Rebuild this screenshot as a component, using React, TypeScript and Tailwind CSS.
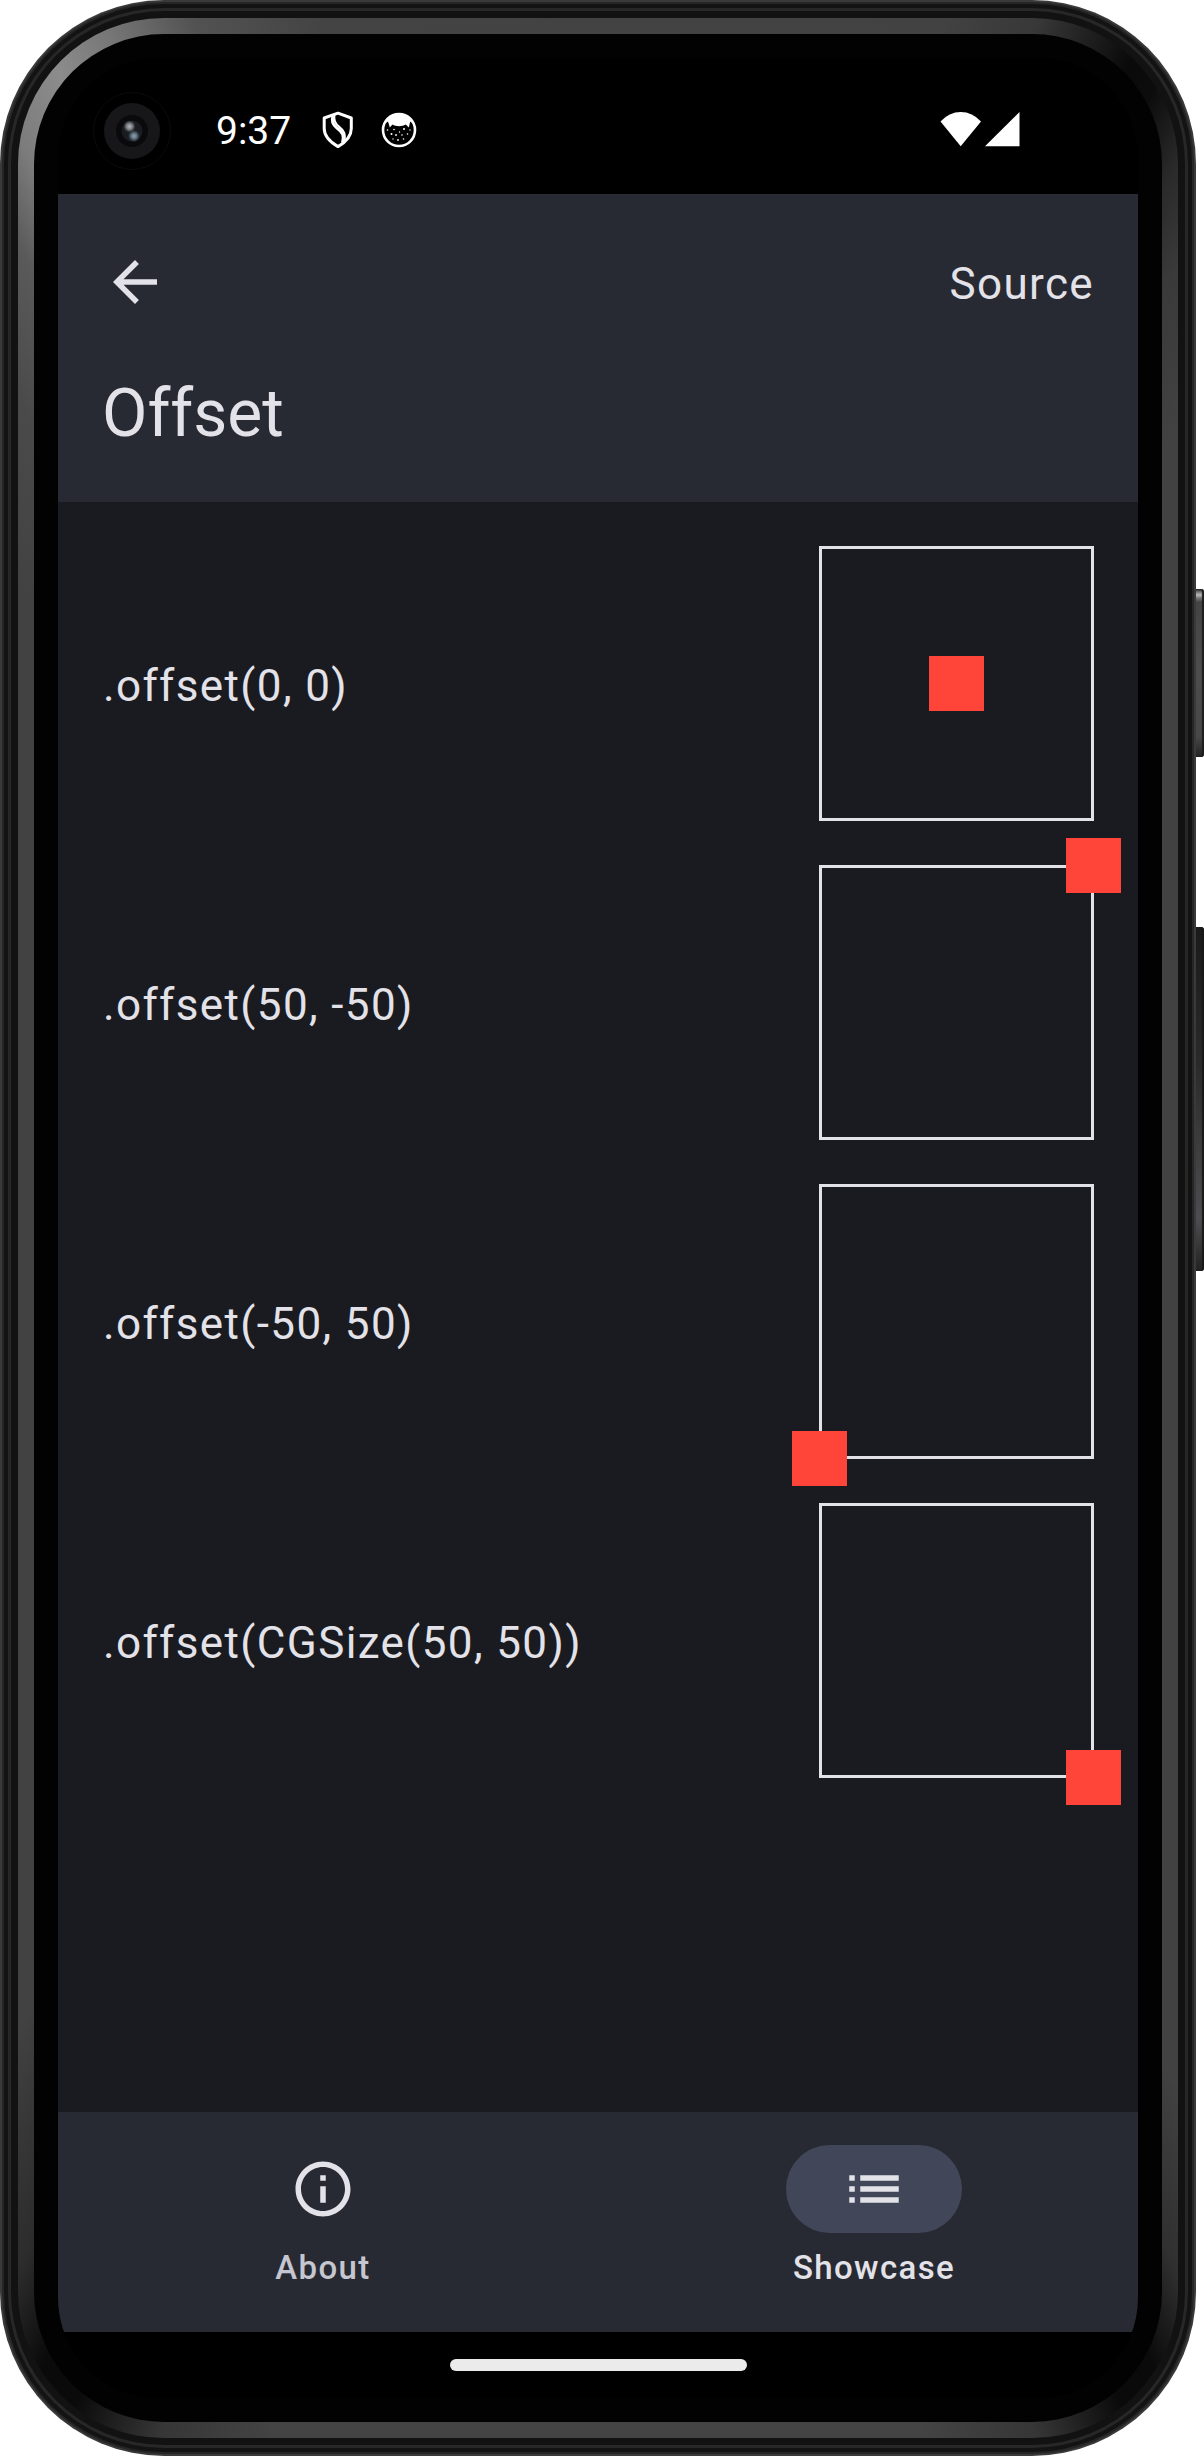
import React from 'react';

const rows = [
  { label: '.offset(0, 0)', shift: '' },
  { label: '.offset(50, -50)', shift: 'translate-x-[137px] -translate-y-[137px]' },
  { label: '.offset(-50, 50)', shift: '-translate-x-[137px] translate-y-[137px]' },
  { label: '.offset(CGSize(50, 50))', shift: 'translate-x-[137px] translate-y-[137px]' },
];

function Camera() {
  return (
    <div className="w-[78px] h-[78px] ml-[35px] rounded-full border border-[#0b0b0b] flex items-center justify-center">
      <div className="w-[56px] h-[56px] rounded-full bg-[#171719] flex items-center justify-center">
        <svg width="32" height="32" viewBox="0 0 32 32">
          <defs>
            <radialGradient id="lensA"><stop offset="0" stopColor="#b4b7bb" /><stop offset="0.5" stopColor="#7b7e83" /><stop offset="1" stopColor="#55585c" stopOpacity="0" /></radialGradient>
            <radialGradient id="lensB"><stop offset="0" stopColor="#8da4b0" /><stop offset="0.5" stopColor="#5b6d79" /><stop offset="1" stopColor="#3a4650" stopOpacity="0" /></radialGradient>
          </defs>
          <circle cx="16" cy="16" r="16" fill="#0a0a0d" />
          <circle cx="16" cy="16" r="10.5" fill="#1a1c21" />
          <circle cx="13.5" cy="11.5" r="6.2" fill="url(#lensA)" />
          <circle cx="18" cy="21" r="6.2" fill="url(#lensB)" />
        </svg>
      </div>
    </div>
  );
}

function Shield() {
  return (
    <svg className="ml-[31px]" width="32" height="38" viewBox="0 0 32 38" fill="none" stroke="#fff" strokeWidth="3" strokeLinejoin="round">
      <path d="M16 2.2 L29.3 7 V17.5 C29.3 25.5 24 31 16 35.6 C8 31 2.2 25.5 2.2 17.5 V7 Z" />
      <path d="M11 5 C9.5 9 10 13 15 17 C21 21.5 22.5 24.5 20.5 32" />
      <path d="M12.500 4 C11.500 9 12.500 12 17 15.500 C22 19.500 24 23 22.500 30" strokeWidth="2" />
    </svg>
  );
}

function Cat() {
  return (
    <svg className="ml-[27px]" width="36" height="36" viewBox="0 0 36 36">
      <circle cx="18" cy="18" r="16" fill="#000" stroke="#fff" strokeWidth="2.6" />
      <path d="M3.500 12 C7 5 12 2 18 2 C24 2 29 5 32.500 12 L29.200 9.500 L27.800 15.500 L24.800 12.500 C21 14.800 15 14.800 11.500 12.500 L8.800 15.500 L7 9.500 Z" fill="#fff" />
      <g fill="#fff">
        <circle cx="6.500" cy="18" r=".8" /><circle cx="13" cy="17.500" r=".8" /><circle cx="23" cy="17" r="1" /><circle cx="29" cy="18" r=".7" />
        <circle cx="10.500" cy="22" r="1" /><circle cx="15" cy="23" r=".9" /><circle cx="18.500" cy="20" r=".7" /><circle cx="21" cy="23" r=".8" /><circle cx="26.500" cy="22" r=".8" />
        <circle cx="12" cy="27" r=".7" /><circle cx="17" cy="28" r=".9" /><circle cx="22.500" cy="27" r=".8" />
      </g>
    </svg>
  );
}

export default function App() {
  return (
    <div className="relative w-[1204px] h-[2456px] bg-white overflow-hidden font-['Roboto',sans-serif] text-[#e3e2e9]">
      {/* Side buttons */}
      <div className="absolute left-[1196px] top-[589px] w-[8px] h-[168px] rounded-r-[3px] bg-[linear-gradient(180deg,#222_0,#777_3px,#bbb_6px,#777_9px,#434545_13px,#4c4e4e_50%,#464848_88%,#222_100%)] shadow-[inset_-2px_0_1px_#1c1c1c]" />
      <div className="absolute left-[1196px] top-[927px] w-[8px] h-[344px] rounded-r-[3px] bg-[linear-gradient(180deg,#191b1b,#292b2b_40%,#4b4d50_85%,#222_100%)] shadow-[inset_-2px_0_1px_#181818]" />

      {/* Phone body */}
      <div className="relative w-[1196px] h-[2456px] rounded-[164px] bg-[#3a3a3a] p-[2px]">
        <div className="h-full rounded-[162px] bg-[#262626] p-[2px]">
          <div className="h-full rounded-[160px] bg-[#131313] p-[4px]">
            <div className="h-full rounded-[156px] bg-[#272727] p-[3px]">
              <div className="h-full rounded-[153px] bg-[#121212] p-[7px]">
                <div className="h-full rounded-[146px] p-[16px] bg-[conic-gradient(from_0deg_at_50%_50%,#434343_0deg,#424242_16deg,#383838_20deg,#0a0a0a_24.5deg,#0c0c0c_26deg,#2a2a2a_28.5deg,#3a3a3a_31deg,#424242_36deg,#424242_146deg,#303030_151deg,#0a0a0a_154deg,#0a0a0a_156deg,#363636_160deg,#444_165deg,#444_195deg,#363636_200deg,#0a0a0a_204deg,#0a0a0a_206deg,#2c2c2c_209deg,#424242_216deg,#424242_318deg,#4a4a4a_325deg,#5a5a5a_329.5deg,#7c7c7c_332deg,#8c8c8c_335deg,#747474_338deg,#525252_341.5deg,#444_347deg,#434343_360deg)]">
                  <div className="h-full rounded-[130px] bg-[#020202] p-[24px]">
                    <div className="h-full rounded-[100px] bg-black overflow-hidden flex flex-col">
                      {/* Status bar */}
                      <div className="h-[136px] flex items-center pt-[7px] shrink-0">
                        <div className="pt-[3px]"><Camera /></div>
                        <span className="ml-[45px] pt-[3px] text-[39px] leading-none text-white">9:37</span>
                        <Shield />
                        <Cat />
                        <svg className="ml-auto mr-[118px]" width="80" height="36" viewBox="0 0 80 36" fill="#fff">
                          <path d="M0.500 9.500 Q9 0 20.700 0 Q32.500 0 41 9.500 L20.700 34.300 Z" />
                          <path d="M79.500 0 V34.300 H45 Z" />
                        </svg>
                      </div>

                      {/* App bar */}
                      <header className="h-[308px] shrink-0 bg-[#282a33] px-[44px]">
                        <div className="h-[176px] flex items-center justify-between">
                          <svg width="66" height="66" viewBox="0 0 24 24" fill="#e3e2e9"><path d="M20 11H7.830l5.590-5.590L12 4l-8 8 8 8 1.410-1.410L7.830 13H20v-2z" /></svg>
                          <span className="pt-[4px] text-[44px] tracking-[1.375px] leading-[66px]">Source</span>
                        </div>
                        <h1 className="text-[66px] leading-[88px]">Offset</h1>
                      </header>

                      {/* Examples */}
                      <main className="flex-1 bg-[#1a1b20] p-[44px] flex flex-col gap-[44px]">
                        {rows.map((r) => (
                          <div key={r.label} className="flex items-center justify-between h-[275px]">
                            <span className="pt-[4px] pl-[1px] text-[44px] leading-[66px] tracking-[1.375px]">{r.label}</span>
                            <div className="w-[275px] h-[275px] border-[3px] border-[#e3e2e9] flex items-center justify-center">
                              <div className={'w-[55px] h-[55px] bg-[#ff453a] ' + r.shift} />
                            </div>
                          </div>
                        ))}
                      </main>

                      {/* Bottom navigation */}
                      <nav className="h-[220px] shrink-0 bg-[#282a33] flex gap-[22px] pt-[33px] text-[33px] font-medium tracking-[1.375px] leading-[44px]">
                        <div className="flex-1 flex flex-col items-center gap-[13px]">
                          <div className="w-[176px] h-[88px] flex items-center justify-center">
                            <svg width="66" height="66" viewBox="0 0 24 24" fill="#e3e2e9"><path d="M11 7h2v2h-2zm0 4h2v6h-2zm1-9C6.480 2 2 6.480 2 12s4.480 10 10 10 10-4.480 10-10S17.520 2 12 2zm0 18c-4.410 0-8-3.590-8-8s3.590-8 8-8 8 3.590 8 8-3.590 8-8 8z" /></svg>
                          </div>
                          <span className="pl-[1px] text-[#c5c6d0]">About</span>
                        </div>
                        <div className="flex-1 flex flex-col items-center gap-[13px]">
                          <div className="w-[176px] h-[88px] rounded-full bg-[#424659] flex items-center justify-center">
                            <svg width="66" height="66" viewBox="0 0 24 24" fill="#e3e2e9"><path d="M3 13h2v-2H3v2zm0 4h2v-2H3v2zm0-8h2V7H3v2zm4 4h14v-2H7v2zm0 4h14v-2H7v2zM7 7v2h14V7H7z" /></svg>
                          </div>
                          <span className="pl-[1px]">Showcase</span>
                        </div>
                      </nav>

                      {/* Gesture bar */}
                      <div className="h-[66px] shrink-0 flex justify-center pt-[27px]">
                        <div className="w-[297px] h-[12px] rounded-full bg-[#ebebeb]" />
                      </div>
                    </div>
                  </div>
                </div>
              </div>
            </div>
          </div>
        </div>
      </div>
    </div>
  );
}
